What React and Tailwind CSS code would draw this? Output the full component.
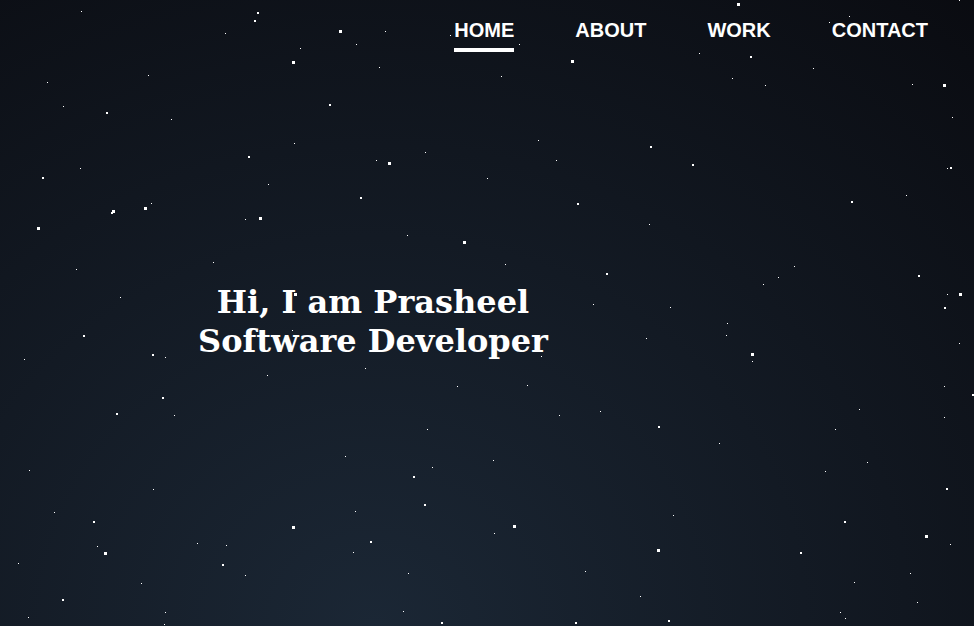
const LINKS = ["HOME", "ABOUT", "WORK", "CONTACT"];

// Each layer of the night sky: star size and the [x, y] of every star.
const STARS = [
  {
    size: 1,
    points: [
      [81, 11], [225, 33], [300, 48], [47, 82], [148, 75], [63, 106], [171, 119], [294, 143], [80, 168], [268, 184], [151, 203],
      [385, 31], [356, 44], [450, 35], [519, 44], [379, 67], [501, 76], [538, 140], [425, 152], [376, 160], [556, 160], [487, 178],
      [959, 0], [849, 16], [829, 22], [699, 53], [813, 68], [732, 78], [765, 85], [912, 84], [952, 117], [947, 168], [906, 195],
      [245, 219], [213, 262], [76, 269], [120, 297], [292, 330], [165, 357], [24, 359], [267, 375], [174, 415],
      [649, 224], [407, 235], [505, 264], [593, 304], [646, 338], [541, 356], [365, 368], [457, 386], [527, 385], [600, 411], [559, 415],
      [794, 266], [778, 277], [763, 284], [670, 307], [947, 294], [727, 323], [726, 335], [959, 343], [752, 361], [944, 386], [859, 409], [944, 417],
      [29, 470], [153, 489], [54, 512], [97, 546], [18, 563], [197, 543], [226, 545], [245, 575], [141, 583], [165, 612], [164, 624], [28, 617],
      [427, 429], [345, 456], [493, 460], [432, 467], [355, 511], [494, 533], [353, 552], [408, 573], [585, 571], [403, 611], [640, 596],
      [835, 429], [719, 443], [867, 462], [825, 471], [673, 515], [950, 544], [910, 573], [854, 582], [917, 602], [840, 612], [845, 618],
    ],
  },
  {
    size: 2,
    points: [
      [257, 12], [254, 20], [106, 112], [248, 156], [42, 177], [329, 104], [360, 197], [577, 203],
      [750, 56], [650, 146], [692, 164], [950, 167], [851, 201], [111, 212], [83, 335], [152, 354], [162, 397], [116, 413],
      [606, 273], [918, 275], [944, 307], [972, 394], [93, 521], [222, 564], [62, 599],
      [413, 476], [424, 504], [370, 541], [441, 622], [575, 622],
      [658, 426], [946, 488], [844, 521], [800, 552], [668, 620],
    ],
  },
  {
    size: 3,
    points: [
      [292, 61], [144, 207], [339, 30], [571, 60], [388, 162], [737, 3], [943, 84],
      [112, 210], [37, 227], [259, 217], [294, 293], [463, 241], [959, 293], [751, 353],
      [104, 552], [292, 526], [513, 525], [657, 549], [925, 535],
    ],
  },
];

function StarField() {
  return (
    <svg aria-hidden="true" shapeRendering="crispEdges" className="pointer-events-none absolute inset-0 h-full w-full fill-white">
      {STARS.map(({ size, points }) =>
        points.map(([x, y]) => <rect key={`${x}-${y}`} x={x} y={y} width={size} height={size} />)
      )}
    </svg>
  );
}

function NavBar() {
  return (
    <nav className="flex justify-end gap-[61px] pt-4 pr-[46px] font-['Liberation_Sans',Arial,sans-serif] text-xl font-bold text-white">
      {LINKS.map((label, i) => (
        <a
          key={label}
          href={`#${label.toLowerCase()}`}
          aria-current={i === 0 ? "page" : undefined}
          className={i === 0 ? "border-b-4 border-white pb-1" : "border-b-4 border-transparent pb-1"}
        >
          {label}
        </a>
      ))}
    </nav>
  );
}

export default function App() {
  return (
    <div className="relative flex min-h-screen flex-col overflow-hidden bg-[radial-gradient(99%_139%_at_calc(50%_-_114px)_100%,#1b2735_0%,#090a0f_100%)]">
      <NavBar />
      <main className="w-[calc(100%-228px)] pt-[231px]">
        <h1 className="text-center font-['DejaVu_Serif',serif] text-[32px] leading-[39px] font-bold text-white">
          Hi, I am Prasheel
          <br />
          Software Developer
        </h1>
      </main>
      <StarField />
    </div>
  );
}
